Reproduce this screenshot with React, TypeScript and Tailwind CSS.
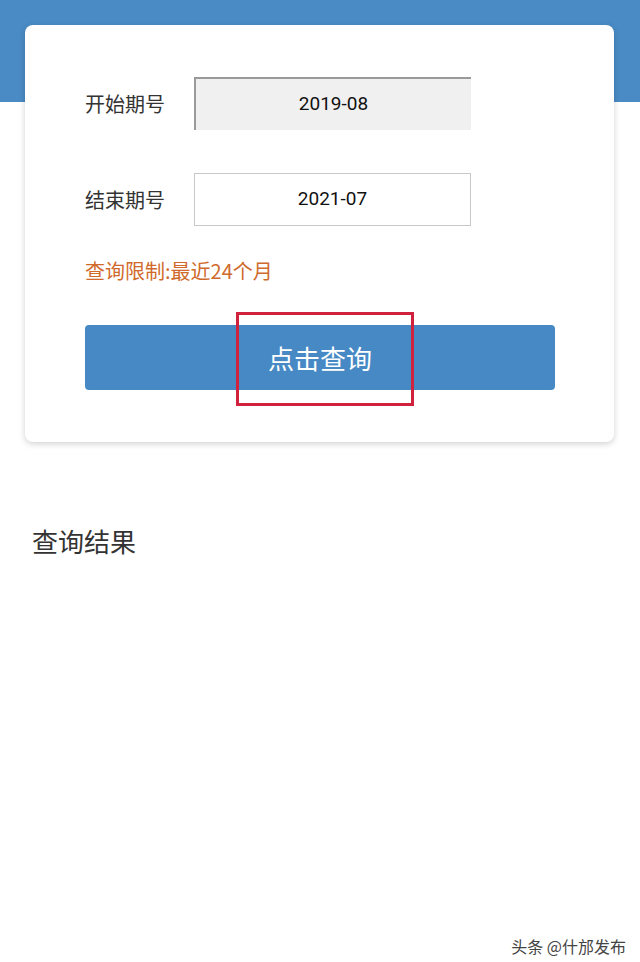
import React from "react";

const font = { fontFamily: '"Noto Sans CJK SC", "Noto Sans", Roboto, sans-serif' };

export default function App() {
  return (
    <div className="relative w-[640px] h-[962px] bg-white overflow-hidden" style={font}>
      <div className="h-[102px] bg-[#4a8bc5]" />
      <div className="absolute left-[25px] top-[25px] w-[589px] h-[417px] bg-white rounded-[8px] shadow-[0_2px_6px_rgba(0,0,0,0.18)]">
        <div className="flex flex-col pl-[60px] pt-[52px]">
          <div className="flex items-center h-[53px]">
            <span className="w-[109px] text-[20px] text-[#333]">开始期号</span>
            <div className="w-[277px] h-[53px] bg-[#f0f0f0] border-t-2 border-l-2 border-[#9a9a9a] flex items-center justify-center text-[19px] text-[#111]" style={{ fontFamily: 'Roboto, "Noto Sans", sans-serif' }}>
              2019-08
            </div>
          </div>
          <div className="flex items-center h-[53px] mt-[43px]">
            <span className="w-[109px] text-[20px] text-[#333]">结束期号</span>
            <div className="w-[277px] h-[53px] bg-white border border-[#c8c8c8] flex items-center justify-center text-[19px] text-[#111]" style={{ fontFamily: 'Roboto, "Noto Sans", sans-serif' }}>
              2021-07
            </div>
          </div>
          <div className="mt-[31px] text-[20px] text-[#cf6a2c] leading-[28px]">查询限制:最近24个月</div>
          <div className="relative mt-[40px] w-[470px] h-[65px] bg-[#4689c4] rounded-[4px] flex items-center justify-center text-white text-[26px]">
            点击查询
            <div className="absolute left-[151px] top-[-13px] w-[178px] h-[94px] border-[3px] border-[#d0213d]" />
          </div>
        </div>
      </div>
      <div className="absolute left-[32px] top-[522px] text-[26px] text-[#333] leading-[38px]">查询结果</div>
      <div className="absolute right-[14px] top-[934px] text-[16px] text-[#444] [text-shadow:0_0_2px_#fff]">头条 @什邡发布</div>
    </div>
  );
}
